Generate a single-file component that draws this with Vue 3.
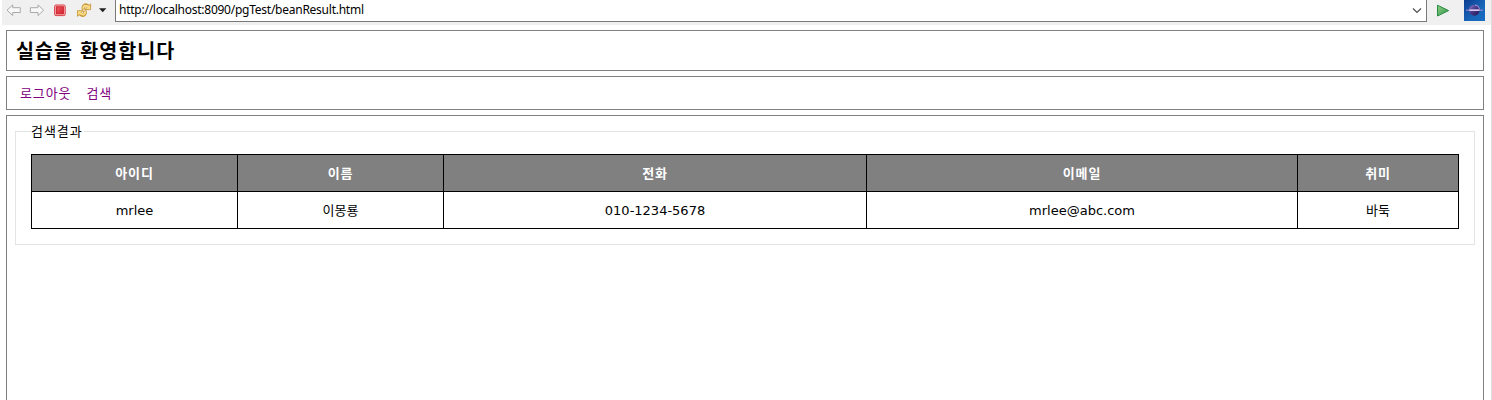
<script setup>
const headers = ['아이디', '이름', '전화', '이메일', '취미']
const row = ['mrlee', '이몽룡', '010-1234-5678', 'mrlee@abc.com', '바둑']
</script>

<template>
  <div class="window">
    <div class="toolbar">
      <svg class="icons" width="113" height="25" viewBox="0 0 113 25">
        <defs>
          <linearGradient id="stop" x1="0" y1="0" x2="1" y2="1">
            <stop offset="0" stop-color="#ee5a60" /><stop offset="1" stop-color="#d0202c" />
          </linearGradient>
        </defs>
        <g fill="#f8f8f8" stroke="#a9a9a9" stroke-linejoin="round">
          <path d="M7 10.2 12.7 4.9V7.7H20.3V12.5H12.7V15.5Z" />
          <path d="M43.7 10.2 38 4.9V7.7H30.4V12.5H38V15.5Z" />
        </g>
        <rect x="54.6" y="5" width="10.6" height="10.6" rx="1.4" fill="#f6b8ba" stroke="#dc4048" />
        <rect x="56.4" y="6.8" width="7" height="7" fill="url(#stop)" stroke="#cf2631" />
        <g fill="none" stroke-linejoin="round">
          <g stroke="#c8963a" stroke-width="3.6">
            <path d="M83.6 9.4C82.6 6 85.3 3.9 87.9 6.2" />
            <path d="M84.6 10.6C86 14.6 83 16.4 80.2 14" />
          </g>
          <g fill="#fbdf87" stroke="#c8963a" stroke-width=".9">
            <path d="M90.6 3.8V9.6H84.9Z" />
            <path d="M77.5 16.4V10.7H83.1Z" />
          </g>
          <g stroke="#fbdf87" stroke-width="1.9">
            <path d="M83.5 8.8C82.8 6.1 85.3 4.5 88.2 6.9" />
            <path d="M84.7 11.2C85.8 14.2 83 15.8 79.9 13.3" />
          </g>
        </g>
        <path d="M99 8.2H106.4L102.7 12.2Z" fill="#202020" />
      </svg>
      <div class="address">
        <span class="url">http://localhost:8090/pgTest/beanResult.html</span>
        <svg width="18" height="20" viewBox="0 0 18 20">
          <path d="M5 8.5 9 12.5 13 8.5" fill="none" stroke="#505050" stroke-width="1.2" />
        </svg>
      </div>
      <svg class="actions" width="64" height="25" viewBox="0 0 64 25">
        <defs>
          <linearGradient id="go" x1="0" y1="0" x2="1" y2="1">
            <stop offset="0" stop-color="#91cf87" /><stop offset="1" stop-color="#289445" />
          </linearGradient>
          <linearGradient id="sky" x1="0" y1="0" x2="1" y2="1">
            <stop offset="0" stop-color="#0c3d91" /><stop offset=".6" stop-color="#1866b9" /><stop offset="1" stop-color="#176ec3" />
          </linearGradient>
          <linearGradient id="moon" x1="0" y1="0" x2="1" y2="1">
            <stop offset="0" stop-color="#8e82cb" /><stop offset=".45" stop-color="#4a3a8c" /><stop offset="1" stop-color="#21134f" />
          </linearGradient>
        </defs>
        <path d="M10.5 5.2V16L21.6 10.6Z" fill="url(#go)" stroke="#298b44" />
        <rect x="37" y="0" width="21" height="21" fill="url(#sky)" />
        <circle cx="47.3" cy="10.2" r="5.5" fill="url(#moon)" />
        <path d="M48 4.8A5.5 5.5 0 0 1 52.6 9" fill="none" stroke="#a694d6" />
        <path d="M39 10.2H56" stroke="#8f86cf" stroke-width="1.2" />
        <path d="M42.5 10.2H52.5" stroke="#d6c8ee" stroke-width="1.6" />
      </svg>
    </div>

    <div class="page">
      <header class="box banner"><h1>실습을 환영합니다</h1></header>
      <nav class="box menu">
        <a>로그아웃</a>
        <a>검색</a>
      </nav>
      <main class="box content">
        <section class="group">
          <div class="legend"><span class="legend-text">검색결과</span></div>
          <div class="table">
            <div v-for="h in headers" :key="h" class="cell head"><span>{{ h }}</span></div>
            <div v-for="c in row" :key="c" class="cell data"><span>{{ c }}</span></div>
          </div>
        </section>
      </main>
    </div>
  </div>
</template>

<style>
body {
  margin: 0;
  overflow: hidden;
  background: #fff;
}
</style>

<style scoped>
.window {
  box-sizing: border-box;
  width: 1492px;
  height: 400px;
  overflow: hidden;
  border-right: 1px solid #dedede;
  font: 13px "DejaVu Sans", "Noto Sans CJK KR", sans-serif;
  color: #000;
}
.toolbar {
  display: flex;
  height: 25px;
  margin-left: 2px;
  background: #f0f0f0;
}
.icons {
  flex: none;
  margin-left: -2px;
  margin-right: 2px;
}
.actions {
  flex: none;
}
.address {
  box-sizing: border-box;
  flex: none;
  display: flex;
  justify-content: space-between;
  width: 1312px;
  height: 22px;
  padding-left: 3px;
  border: 1px solid #7a7a7a;
  border-top: 0;
  background: #fff;
}
.url {
  font: 12px/20px "Noto Sans", sans-serif;
  letter-spacing: -0.25px;
  white-space: nowrap;
}
.page {
  display: flex;
  flex-direction: column;
  gap: 5px;
  padding: 5px 7px 0 6px;
}
.box {
  box-sizing: border-box;
  border: 1px solid #808080;
}
.banner {
  height: 41px;
  padding-left: 9px;
}
h1 {
  margin: 0;
  font: bold 19.5px/38px "Noto Sans CJK KR", sans-serif;
  letter-spacing: 1.1px;
  word-spacing: 1.5px;
}
.menu {
  display: flex;
  gap: 15px;
  height: 34px;
  padding-left: 13px;
  font: 13px/31px "Noto Sans CJK KR", sans-serif;
  color: #800080;
}
.menu a {
  letter-spacing: 0.9px;
}
.content {
  height: 340px;
  padding: 15px 8px 0;
}
.group {
  box-sizing: border-box;
  height: 114px;
  border: 1px solid #e4e4e4;
  border-top: 0;
  padding: 0 15px;
}
.legend {
  display: flex;
  height: 23px;
  margin: 0 -15px;
}
.legend::before,
.legend::after {
  content: "";
  height: 1px;
  background: #e4e4e4;
}
.legend::before {
  width: 15px;
}
.legend::after {
  flex: 1;
}
.legend-text {
  width: 53px;
  margin-top: -10px;
  font: 13px/20px "Noto Sans CJK KR", sans-serif;
  letter-spacing: 0.95px;
  white-space: nowrap;
}
.table {
  display: grid;
  grid-template-columns: 205px 205px 422px 430px 160px;
  grid-template-rows: 36px 36px;
  gap: 1px;
  width: 1426px;
  padding: 1px;
  background: #000;
}
.cell {
  display: flex;
  align-items: center;
  justify-content: center;
  background: #fff;
  line-height: 20px;
}
.data {
  box-sizing: border-box;
  padding-top: 1px;
}
.head {
  background: #808080;
  color: #fff;
  font-family: "Noto Sans CJK KR", sans-serif;
  font-weight: bold;
  letter-spacing: 0.8px;
}
</style>
